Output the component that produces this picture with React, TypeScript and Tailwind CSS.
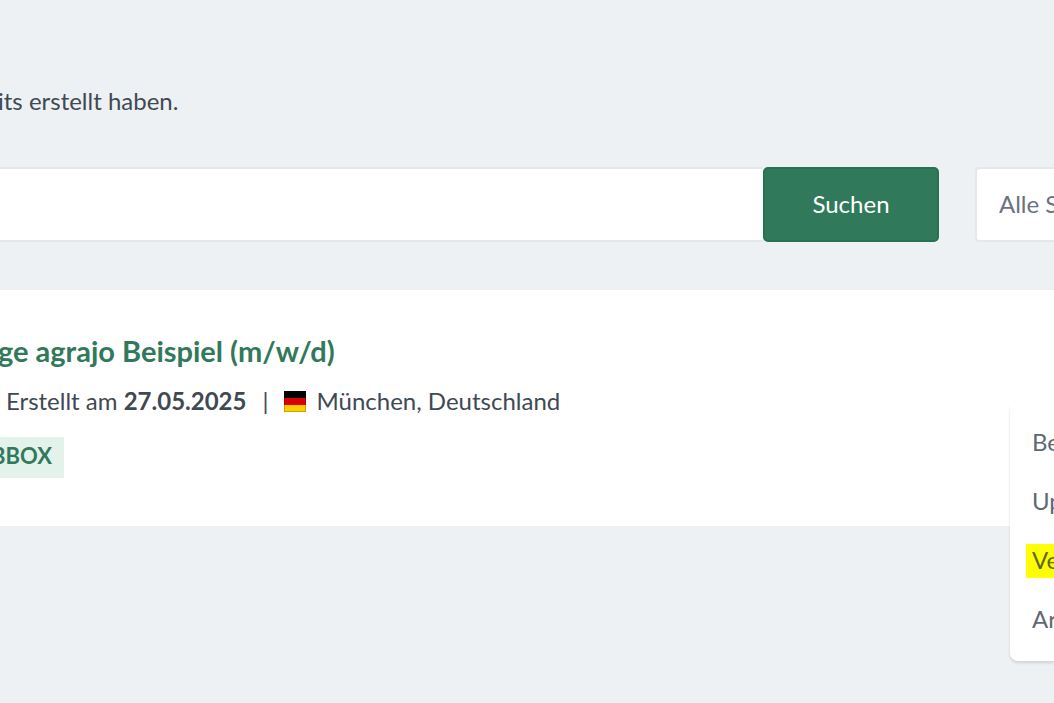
import { useState } from "react";

const actions = [
    { label: "Be", marked: false },
    { label: "Up", marked: false },
    { label: "Ve", marked: true },
    { label: "Ar", marked: false },
];

function GermanFlag() {
    return (
        <svg width="22" height="22" viewBox="0 0 22 22" aria-hidden="true" className="shrink-0">
            <rect width="22" height="8" y="1" fill="#000000" />
            <rect width="22" height="7" y="8" fill="#dd0000" />
            <rect width="22" height="7" y="15" fill="#ffce00" />
            <rect x="0.5" y="1.5" width="21" height="20" fill="none" stroke="#000000" strokeOpacity="0.2" />
        </svg>
    );
}

function SearchBar() {
    const [query, setQuery] = useState("");

    return (
        <form className="flex" onSubmit={(e) => e.preventDefault()}>
            <input
                type="text"
                aria-label="Suche"
                value={query}
                onChange={(e) => setQuery(e.target.value)}
                className="h-[75px] min-w-0 flex-1 border-y-2 border-[#e4e8ec] bg-white px-6 outline-none"
            />
            <button type="submit" className="h-[75px] w-44 rounded-[5px] border-2 border-[#2a7152] bg-[#31795b] pb-0.5 text-white">
                Suchen
            </button>
            {/* Status filter */}
            <select
                aria-label="Status"
                className="ml-9 h-[75px] w-[79px] appearance-none rounded-l-sm border-2 border-r-0 border-[#e4e8ec] bg-white pb-0.5 pl-[22px] text-[#6b7280] outline-none"
            >
                <option>Alle S</option>
            </select>
        </form>
    );
}

function ActionMenu() {
    return (
        <div className="absolute top-28 right-0 flex w-11 flex-col gap-[25px] overflow-hidden rounded-l-lg bg-white pt-6 pb-6 pl-4 text-[#5f6973] shadow-[0_2px_3px_rgba(0,0,0,0.12)]">
            {actions.map((action) => (
                <button
                    key={action.label}
                    type="button"
                    className={`h-[34px] pb-0.5 pl-1.5 text-left whitespace-nowrap ${action.marked ? "bg-[#ffff00] text-[#5f691f]" : ""}`}
                >
                    {action.label}
                </button>
            ))}
        </div>
    );
}

function JobCard() {
    return (
        <article className="relative mt-12 bg-white pt-[43px] pb-12">
            <h2 className="-ml-0.5 text-[29px] leading-9 font-bold text-[#31795b]">
                <a href="#">ge agrajo Beispiel (m/w/d)</a>
            </h2>
            <div className="mt-4 flex h-8 items-center pl-1.5">
                <span>
                    Erstellt am <strong>27.05.2025</strong>
                </span>
                <span className="px-4">|</span>
                <GermanFlag />
                <span className="pl-2.5">München, Deutschland</span>
            </div>
            <div className="mt-5 flex h-[41px] w-16 items-center justify-end overflow-hidden bg-[#e3f3ec] pr-3 pb-1 text-[22px] font-bold text-[#31795b]">
                BBOX
            </div>
            <ActionMenu />
        </article>
    );
}

export default function App() {
    return (
        <main className="min-h-screen overflow-hidden bg-[#edf1f4] pt-[85px] font-['Lato',sans-serif] text-2xl leading-8 text-[#3f4954]">
            <p className="-ml-0.5 mb-[50px]">its erstellt haben.</p>
            <SearchBar />
            <JobCard />
        </main>
    );
}
